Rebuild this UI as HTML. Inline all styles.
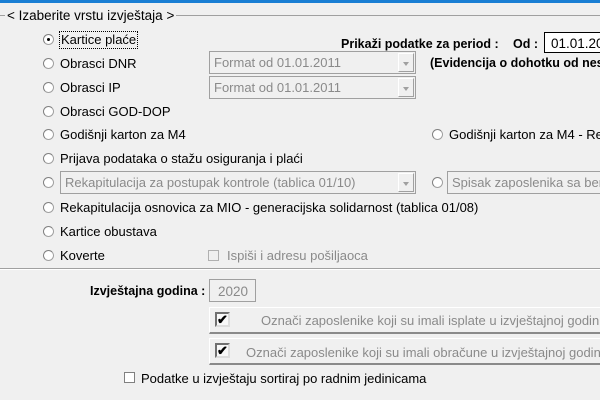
<!DOCTYPE html><html><head><style>
*{margin:0;padding:0;box-sizing:border-box}
html,body{width:600px;height:400px;overflow:hidden}
body{background:#f0f0f0;font-family:"Liberation Sans",Arial,sans-serif;font-size:13px;color:#000;position:relative}
.a{position:absolute;white-space:nowrap;line-height:15px}
.r{position:absolute;width:11px;height:11px;border-radius:50%;background:#fff;border:1px solid #a0a0a0;border-top-color:#808080;border-left-color:#808080}
.r.on::after{content:"";position:absolute;left:3px;top:3px;width:3px;height:3px;border-radius:50%;background:#000}
.g{color:#8a8a8a}
.b{font-weight:bold;font-size:12.5px}
.combo{position:absolute;border:1px solid #a0a0a0;background:#f0f0f0;color:#8a8a8a;padding-left:4px;line-height:21px;white-space:nowrap;overflow:hidden}
.combo .btn{position:absolute;right:1px;top:1px;bottom:1px;width:16px;border:1px solid #fff;border-right-color:#a0a0a0;border-bottom-color:#a0a0a0;background:#f0f0f0}
.combo .btn::after{content:"";position:absolute;left:4px;top:8px;border-left:3px solid transparent;border-right:3px solid transparent;border-top:4px solid #a0a0a0}
.cb{position:absolute;width:11px;height:11px;border:1px solid #808080;background:#fff}
.pan{position:absolute;left:209px;width:391px;border-top:1px solid #fff;border-left:1px solid #fff;border-bottom:2px solid #8a8a8a;overflow:hidden}
.pan .cb{left:5px;top:4px;width:15px;height:15px;border:2px solid #707070;border-right-color:#ddd;border-bottom-color:#ddd;background:#f8f8f8;font-size:13px;line-height:11px;text-align:center;font-weight:bold}
</style></head><body>
<div style="position:absolute;left:0;top:0;width:600px;height:3px;background:#1a7fd4"></div>
<div style="position:absolute;left:0;top:15px;width:600px;height:1px;background:#a0a0a0"></div>
<div class="a" style="left:5px;top:8px;background:#f0f0f0;padding:0 2px;font-size:13.5px">&lt; Izaberite vrstu izvještaja &gt;</div>

<div class="r on" style="left:43px;top:34px"></div>
<div class="a" style="left:59px;top:31px;border:1px dotted #000;padding:1px 1px;line-height:14px">Kartice plaće</div>
<div class="a b" style="left:341px;top:37px">Prikaži podatke za period :</div>
<div class="a b" style="left:513px;top:37px">Od :</div>
<div class="a" style="left:544px;top:32px;width:60px;height:21px;border:1px solid #000;border-right:none;background:#fff;padding:3px 0 0 6px;font-size:13.5px;overflow:hidden">01.01.2020</div>

<div class="r" style="left:43px;top:58px"></div><div class="a" style="left:60px;top:56px">Obrasci DNR</div>
<div class="combo" style="left:209px;top:51px;width:207px;height:23px">Format od 01.01.2011<div class="btn"></div></div>
<div class="a b" style="left:430px;top:56px;width:170px;overflow:hidden">(Evidencija o dohotku od nesamostalne</div>

<div class="r" style="left:43px;top:82px"></div><div class="a" style="left:60px;top:80px">Obrasci IP</div>
<div class="combo" style="left:209px;top:76px;width:207px;height:23px">Format od 01.01.2011<div class="btn"></div></div>

<div class="r" style="left:43px;top:106px"></div><div class="a" style="left:60px;top:104px">Obrasci GOD-DOP</div>
<div class="r" style="left:43px;top:129px"></div><div class="a" style="left:60px;top:127px">Godišnji karton za M4</div>
<div class="r" style="left:432px;top:129px"></div><div class="a" style="left:449px;top:127px;width:151px;overflow:hidden">Godišnji karton za M4 - Rekap</div>
<div class="r" style="left:43px;top:153px"></div><div class="a" style="left:60px;top:151px">Prijava podataka o stažu osiguranja i plaći</div>

<div class="r" style="left:43px;top:177px"></div>
<div class="combo" style="left:60px;top:171px;width:356px;height:23px">Rekapitulacija za postupak kontrole (tablica 01/10)<div class="btn"></div></div>
<div class="r" style="left:432px;top:177px"></div>
<div class="combo" style="left:447px;top:171px;width:153px;height:23px;border-right:none">Spisak zaposlenika sa beneficiranim</div>

<div class="r" style="left:43px;top:202px"></div><div class="a" style="left:60px;top:200px">Rekapitulacija osnovica za MIO - generacijska solidarnost (tablica 01/08)</div>
<div class="r" style="left:43px;top:226px"></div><div class="a" style="left:60px;top:224px">Kartice obustava</div>
<div class="r" style="left:43px;top:250px"></div><div class="a" style="left:60px;top:248px">Koverte</div>
<div class="cb" style="left:208px;top:250px;border-color:#b0b0b0;background:#f0f0f0"></div>
<div class="a g" style="left:227px;top:248px">Ispiši i adresu pošiljaoca</div>

<div style="position:absolute;left:0;top:268px;width:600px;height:1px;background:#a0a0a0"></div>
<div style="position:absolute;left:0;top:269px;width:600px;height:1px;background:#fff"></div>

<div class="a b" style="left:90px;top:284px">Izvještajna godina :</div>
<div class="a g" style="left:209px;top:279px;width:47px;height:23px;border:1px solid #a0a0a0;padding:4px 0 0 8px;font-size:13.5px">2020</div>

<div class="pan" style="top:307px;height:27px"><div class="cb">✔</div><div class="a g" style="left:51px;top:5px">Označi zaposlenike koji su imali isplate u izvještajnoj godini</div></div>
<div class="pan" style="top:338px;height:27px"><div class="cb">✔</div><div class="a g" style="left:36px;top:6px">Označi zaposlenike koji su imali obračune u izvještajnoj godini</div></div>

<div class="cb" style="left:124px;top:372px"></div>
<div class="a" style="left:141px;top:371px">Podatke u izvještaju sortiraj po radnim jedinicama</div>
</body></html>
